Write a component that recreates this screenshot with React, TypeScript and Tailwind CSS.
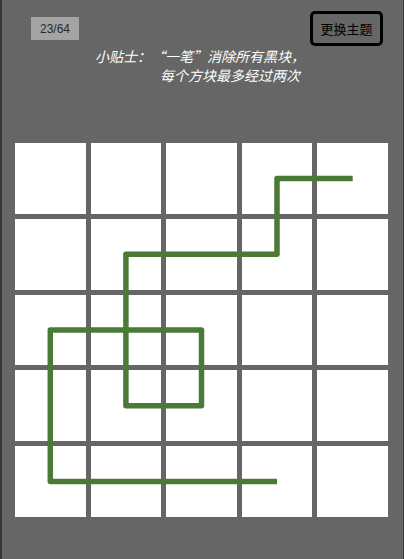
import React from "react";

export default function App() {
  const cells = Array.from({ length: 25 });
  return (
    <div className="w-[404px] h-[559px] bg-[#666666] border-l-2 border-r border-[#383838] overflow-hidden" style={{ fontFamily: '"Liberation Sans", "Noto Sans CJK SC", sans-serif' }}>
      <div className="flex justify-between items-start pt-[11px] pl-[29px] pr-[20px]">
        <div className="mt-[6px] w-[48px] h-[23px] bg-[#a3a3a3] text-[#2a2a2a] text-[12px] flex items-center justify-center">23/64</div>
        <button className="w-[73px] h-[35px] border-[3px] border-black rounded-[5px] text-[13px] text-black flex items-center justify-center" style={{ fontFamily: '"Noto Sans CJK SC", sans-serif' }}>
          更换主题
        </button>
      </div>
      <div className="mt-px text-white italic text-[14px] leading-[19px]" style={{ fontFamily: '"Noto Sans CJK SC", sans-serif' }}>
        <div className="pl-[93px]">小贴士：“一笔”消除所有黑块，</div>
        <div className="pl-[158px]">每个方块最多经过两次</div>
      </div>
      <div className="relative mt-[58px] ml-[13px] w-[373px] h-[374px] grid grid-cols-5 grid-rows-5 gap-[5px]">
        {cells.map((_, i) => (
          <div key={i} className="bg-white" />
        ))}
        <svg className="absolute inset-0 pointer-events-none" width="373" height="374" viewBox="0 0 373 374">
          <path
            d="M337.7 35.4 H262 V111.2 H110.9 V262.8 H186.5 V187 H35.3 V338.6 H262"
            fill="none"
            stroke="#4b7a37"
            strokeWidth="5.5"
            strokeLinejoin="round"
            strokeLinecap="butt"
          />
        </svg>
      </div>
    </div>
  );
}
